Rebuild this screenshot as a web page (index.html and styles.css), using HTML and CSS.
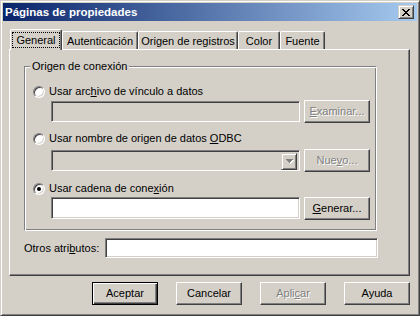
FILE: index.html
```html
<!DOCTYPE html>
<html lang="es">
<head>
<meta charset="utf-8">
<title>Páginas de propiedades</title>
<link rel="stylesheet" href="styles.css">
</head>
<body>
<div class="window">
  <div class="titlebar">
    <span class="title">Páginas de propiedades</span>
    <span class="close">
      <svg width="8" height="7" viewBox="0 0 8 7" shape-rendering="crispEdges">
        <rect x="0" y="0" width="2" height="1"/><rect x="6" y="0" width="2" height="1"/>
        <rect x="1" y="1" width="2" height="1"/><rect x="5" y="1" width="2" height="1"/>
        <rect x="2" y="2" width="4" height="1"/>
        <rect x="3" y="3" width="2" height="1"/>
        <rect x="2" y="4" width="4" height="1"/>
        <rect x="1" y="5" width="2" height="1"/><rect x="5" y="5" width="2" height="1"/>
        <rect x="0" y="6" width="2" height="1"/><rect x="6" y="6" width="2" height="1"/>
      </svg>
    </span>
  </div>
  <div class="body">
    <div class="tabs">
      <div class="tab active"><span class="focus">General</span></div>
      <div class="tab w-aut">Autenticación</div>
      <div class="tab w-ori">Origen de registros</div>
      <div class="tab w-col">Color</div>
      <div class="tab w-fue">Fuente</div>
    </div>
    <div class="panel">
      <div class="group">
        <span class="group-title">Origen de conexión</span>
        <div class="option opt1"><span class="radio"></span><span>Usar arc<u>h</u>ivo de vínculo a datos</span></div>
        <div class="field-row row1">
          <div class="input disabled"></div>
          <div class="btn disabled"><span><u>E</u>xaminar...</span></div>
        </div>
        <div class="option opt2"><span class="radio"></span><span>Usar nombre de origen de datos <u>O</u>DBC</span></div>
        <div class="field-row row2">
          <div class="input disabled combo">
            <span class="drop">
              <svg width="8" height="5" viewBox="0 0 8 5" shape-rendering="crispEdges">
                <rect x="1" y="1" width="7" height="1" fill="#fff"/>
                <rect x="2" y="2" width="5" height="1" fill="#fff"/>
                <rect x="3" y="3" width="3" height="1" fill="#fff"/>
                <rect x="4" y="4" width="1" height="1" fill="#fff"/>
                <rect x="0" y="0" width="7" height="1" fill="#808080"/>
                <rect x="1" y="1" width="5" height="1" fill="#808080"/>
                <rect x="2" y="2" width="3" height="1" fill="#808080"/>
                <rect x="3" y="3" width="1" height="1" fill="#808080"/>
              </svg>
            </span>
          </div>
          <div class="btn disabled"><span>Nue<u>v</u>o...</span></div>
        </div>
        <div class="option opt3"><span class="radio checked"></span><span>Usar cadena de cone<u>x</u>ión</span></div>
        <div class="field-row row3">
          <div class="input tall"></div>
          <div class="btn"><span><u>G</u>enerar...</span></div>
        </div>
      </div>
      <div class="attr-row">
        <span class="attr-label">Otros atri<u>b</u>utos:</span>
        <div class="input attr"></div>
      </div>
    </div>
    <div class="buttons">
      <div class="btn default"><span>Aceptar</span></div>
      <div class="btn"><span>Cancelar</span></div>
      <div class="btn disabled"><span>Apli<u>c</u>ar</span></div>
      <div class="btn"><span>Ayuda</span></div>
    </div>
  </div>
</div>
</body>
</html>
```
FILE: styles.css
```css
html, body {
  margin: 0;
  padding: 0;
  background: #D4D0C8;
}
body {
  font: 11px/13px "Liberation Sans", Arial, sans-serif;
  color: #000;
}
u {
  text-decoration: underline;
  text-underline-offset: 1px;
}

.window {
  width: 420px;
  height: 316px;
  box-sizing: border-box;
  background: #D4D0C8;
  border: 1px solid;
  border-color: #D4D0C8 #404040 #404040 #D4D0C8;
  box-shadow: inset 1px 1px 0 #fff, inset -1px -1px 0 #808080;
  padding: 2px;
  display: flex;
  flex-direction: column;
}

.titlebar {
  height: 18px;
  flex: none;
  display: flex;
  align-items: center;
  justify-content: space-between;
  background: linear-gradient(to right, #0A246A, #A6CAF0);
  padding: 0 3px 0 2px;
}
.title {
  color: #fff;
  font-weight: bold;
  font-size: 11.5px;
}
.close {
  width: 16px;
  height: 14px;
  box-sizing: border-box;
  background: #D4D0C8;
  border: 1px solid;
  border-color: #D4D0C8 #404040 #404040 #D4D0C8;
  box-shadow: inset 1px 1px 0 #fff, inset -1px -1px 0 #808080;
  display: flex;
  align-items: center;
  justify-content: center;
  padding-top: 0;
}

.body {
  flex: 1;
  padding: 8px 7px 0 6px;
  display: flex;
  flex-direction: column;
}

.tabs {
  height: 20px;
  display: flex;
  align-items: flex-end;
  padding-left: 1px;
  position: relative;
  z-index: 1;
}
.tab {
  height: 18px;
  box-sizing: border-box;
  border-left: 1px solid #fff;
  border-top: 1px solid #fff;
  border-right: 1px solid #404040;
  box-shadow: inset -1px 0 0 #808080;
  border-radius: 2px 2px 0 0;
  text-align: center;
  padding-top: 3px;
  background: #D4D0C8;
}
.tab.active {
  width: 52px;
  height: 21px;
  margin-bottom: -1px;
  padding: 2px 1px 0;
}
.focus {
  display: block;
  height: 16px;
  box-sizing: border-box;
  border: 1px dotted #000;
  padding-top: 1px;
}
.w-aut { width: 76px; }
.w-ori { width: 100px; }
.w-col { width: 42px; }
.w-fue { width: 45px; }

.panel {
  height: 227px;
  flex: none;
  box-sizing: border-box;
  border: 1px solid;
  border-color: #fff #404040 #404040 #fff;
  box-shadow: inset -1px -1px 0 #808080;
  padding: 16px 0 0 14px;
}

.group {
  width: 353px;
  height: 165px;
  box-sizing: border-box;
  border: 1px solid;
  border-color: #808080 #fff #fff #808080;
  box-shadow: inset 1px 1px 0 #fff, inset -1px -1px 0 #808080;
  display: flex;
  flex-direction: column;
  align-items: flex-start;
}
.group-title {
  margin: -7px 0 0 5px;
  padding: 0 2px;
  background: #D4D0C8;
  line-height: 13px;
}

.option {
  display: flex;
  align-items: center;
  gap: 4px;
  height: 13px;
  margin-left: 8px;
}
.opt1 { margin-top: 12px; }
.opt2 { margin-top: 9px; }
.opt3 { margin-top: 10px; }

.radio {
  width: 12px;
  height: 12px;
  box-sizing: border-box;
  border-radius: 50%;
  border: 1px solid;
  border-color: #808080 #fff #fff #808080;
  box-shadow: inset 1px 1px 0 #404040, inset -1px -1px 0 #D4D0C8;
  background: #fff;
  display: flex;
  align-items: center;
  justify-content: center;
}
.radio.checked::after {
  content: "";
  width: 4px;
  height: 4px;
  border-radius: 50%;
  background: #000;
}

.field-row {
  display: flex;
  align-items: flex-start;
  gap: 4px;
  margin-left: 26px;
}
.row1 { margin-top: 2px; }
.row2 { margin-top: 4px; }
.row3 { margin-top: 2px; }

.input {
  width: 249px;
  height: 21px;
  margin-top: 1px;
  box-sizing: border-box;
  background: #fff;
  border: 1px solid;
  border-color: #808080 #fff #fff #808080;
  box-shadow: inset 1px 1px 0 #404040, inset -1px -1px 0 #D4D0C8;
}
.input.disabled {
  background: #D4D0C8;
}
.input.tall {
  height: 22px;
  margin-top: 0;
}
.combo {
  display: flex;
  justify-content: flex-end;
  padding: 2px;
}
.drop {
  width: 16px;
  height: 17px;
  box-sizing: border-box;
  border: 1px solid;
  border-color: #D4D0C8 #404040 #404040 #D4D0C8;
  box-shadow: inset 1px 1px 0 #fff, inset -1px -1px 0 #808080;
  display: flex;
  align-items: center;
  justify-content: center;
  padding-left: 1px;
}

.btn {
  width: 66px;
  height: 23px;
  flex: none;
  box-sizing: border-box;
  border: 1px solid;
  border-color: #fff #404040 #404040 #fff;
  box-shadow: inset -1px -1px 0 #808080;
  display: flex;
  align-items: center;
  justify-content: center;
  background: #D4D0C8;
}
.btn.disabled {
  color: #808080;
  text-shadow: 1px 1px 0 #fff;
}
.btn.default {
  border-color: #000;
  box-shadow: inset 1px 1px 0 #fff, inset -1px -1px 0 #404040, inset -2px -2px 0 #808080;
}

.attr-row {
  display: flex;
  align-items: center;
  margin-top: 7px;
}
.attr-label {
  width: 81px;
}
.input.attr {
  width: 273px;
  height: 20px;
  margin-top: 0;
}

.buttons {
  display: flex;
  justify-content: flex-end;
  gap: 18px;
  margin-top: 6px;
}
```
